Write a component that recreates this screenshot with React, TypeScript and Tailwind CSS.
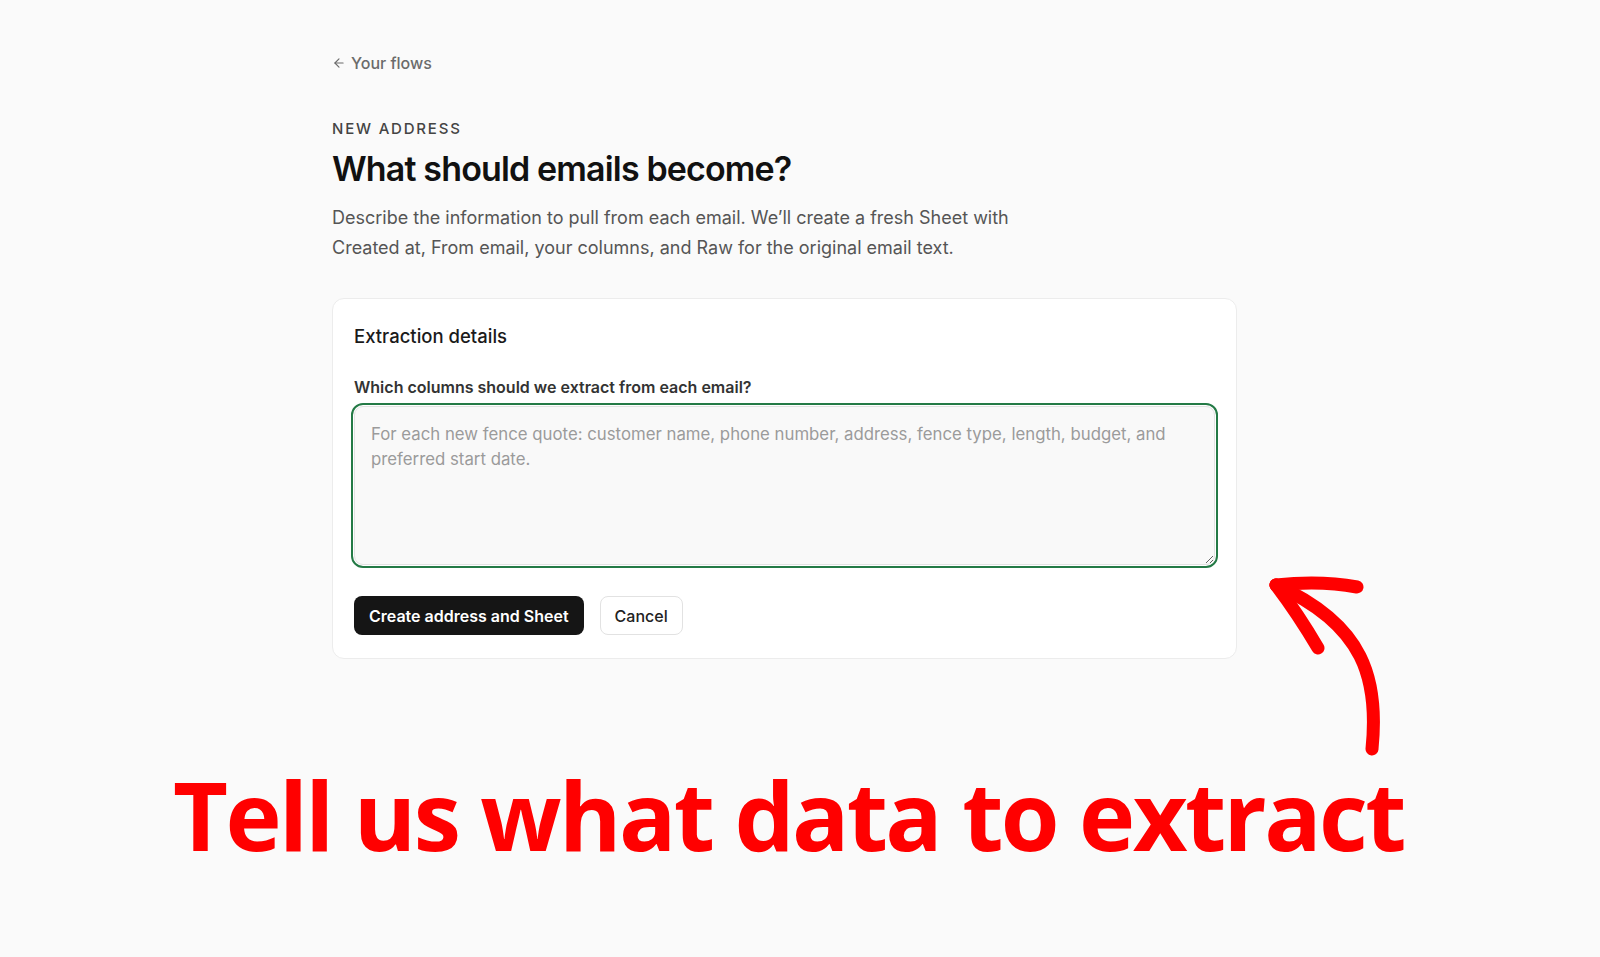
import React from "react";
import { ArrowLeft } from "lucide-react";

const App: React.FC = () => {
  return (
    <div className="relative h-[957px] w-full overflow-hidden bg-[#fafafa] font-['Inter','Liberation_Sans',sans-serif]">
      <div className="pl-[332px] pt-[53px]">
        {/* back link */}
        <a href="#" className="flex h-5 items-center gap-[5px] text-[16px] leading-5 font-medium text-[#6b6b6b]">
          <ArrowLeft className="h-[14px] w-[14px]" strokeWidth={2} />
          <span>Your flows</span>
        </a>

        <div className="mt-[46px] text-[15px] leading-5 font-medium uppercase tracking-[0.12em] text-[#444]">
          New address
        </div>
        <h1 className="mt-[10px] text-[34px] leading-[40px] font-semibold tracking-[-0.025em] text-[#111]">
          What should emails become?
        </h1>
        <p className="mt-[14px] max-w-[760px] text-[18px] leading-[30px] text-[#555]">
          Describe the information to pull from each email. We’ll create a fresh Sheet with
          <br />
          Created at, From email, your columns, and Raw for the original email text.
        </p>

        {/* card */}
        <div className="mt-[35px] w-[905px] rounded-[12px] border border-[#ececec] bg-white px-[21px] pt-[24px] pb-[23px]">
          <h2 className="text-[18.5px] leading-[26px] font-medium text-[#1a1a1a]">Extraction details</h2>
          <label className="mt-[27px] block text-[16px] leading-[22px] font-semibold text-[#333]">
            Which columns should we extract from each email?
          </label>
          <textarea
            className="mt-[8px] block h-[159px] w-full resize-y rounded-[9px] border border-[#e2e2e2] bg-[#f9f9f9] px-4 pt-[15px] text-[16.8px] leading-[25px] text-[#222] outline-2 outline-offset-1 outline-[#247a46] outline-solid placeholder:text-[#9b9b9b]"
            placeholder="For each new fence quote: customer name, phone number, address, fence type, length, budget, and preferred start date."
          />
          <div className="mt-[31px] flex items-center gap-4">
            <button className="h-[39px] rounded-[8px] bg-[#151515] px-[15px] text-[16px] font-semibold text-white">
              Create address and Sheet
            </button>
            <button className="h-[39px] rounded-[8px] border border-[#e2e2e2] bg-white px-[14px] text-[16px] font-medium text-[#222]">
              Cancel
            </button>
          </div>
        </div>
      </div>

      {/* annotation */}
      <div className="mt-[108px] pl-[173px] font-['Open_Sans','Noto_Sans',sans-serif] text-[95px] leading-[95px] font-bold tracking-[-2.6px] whitespace-nowrap text-[#ff0000]">
        Tell us what data to extract
      </div>

      <svg className="pointer-events-none absolute top-0 left-0" width="1600" height="957" viewBox="0 0 1600 957" fill="none">
        <g stroke="#ff0000" strokeWidth="13" strokeLinecap="round" strokeLinejoin="round">
          <path d="M1372 749 C1379 680 1365 625 1276 585" />
          <path d="M1276 585 Q1320 580 1357 587" />
          <path d="M1276 585 Q1298 614 1318 648" />
        </g>
      </svg>
    </div>
  );
};

export default App;
